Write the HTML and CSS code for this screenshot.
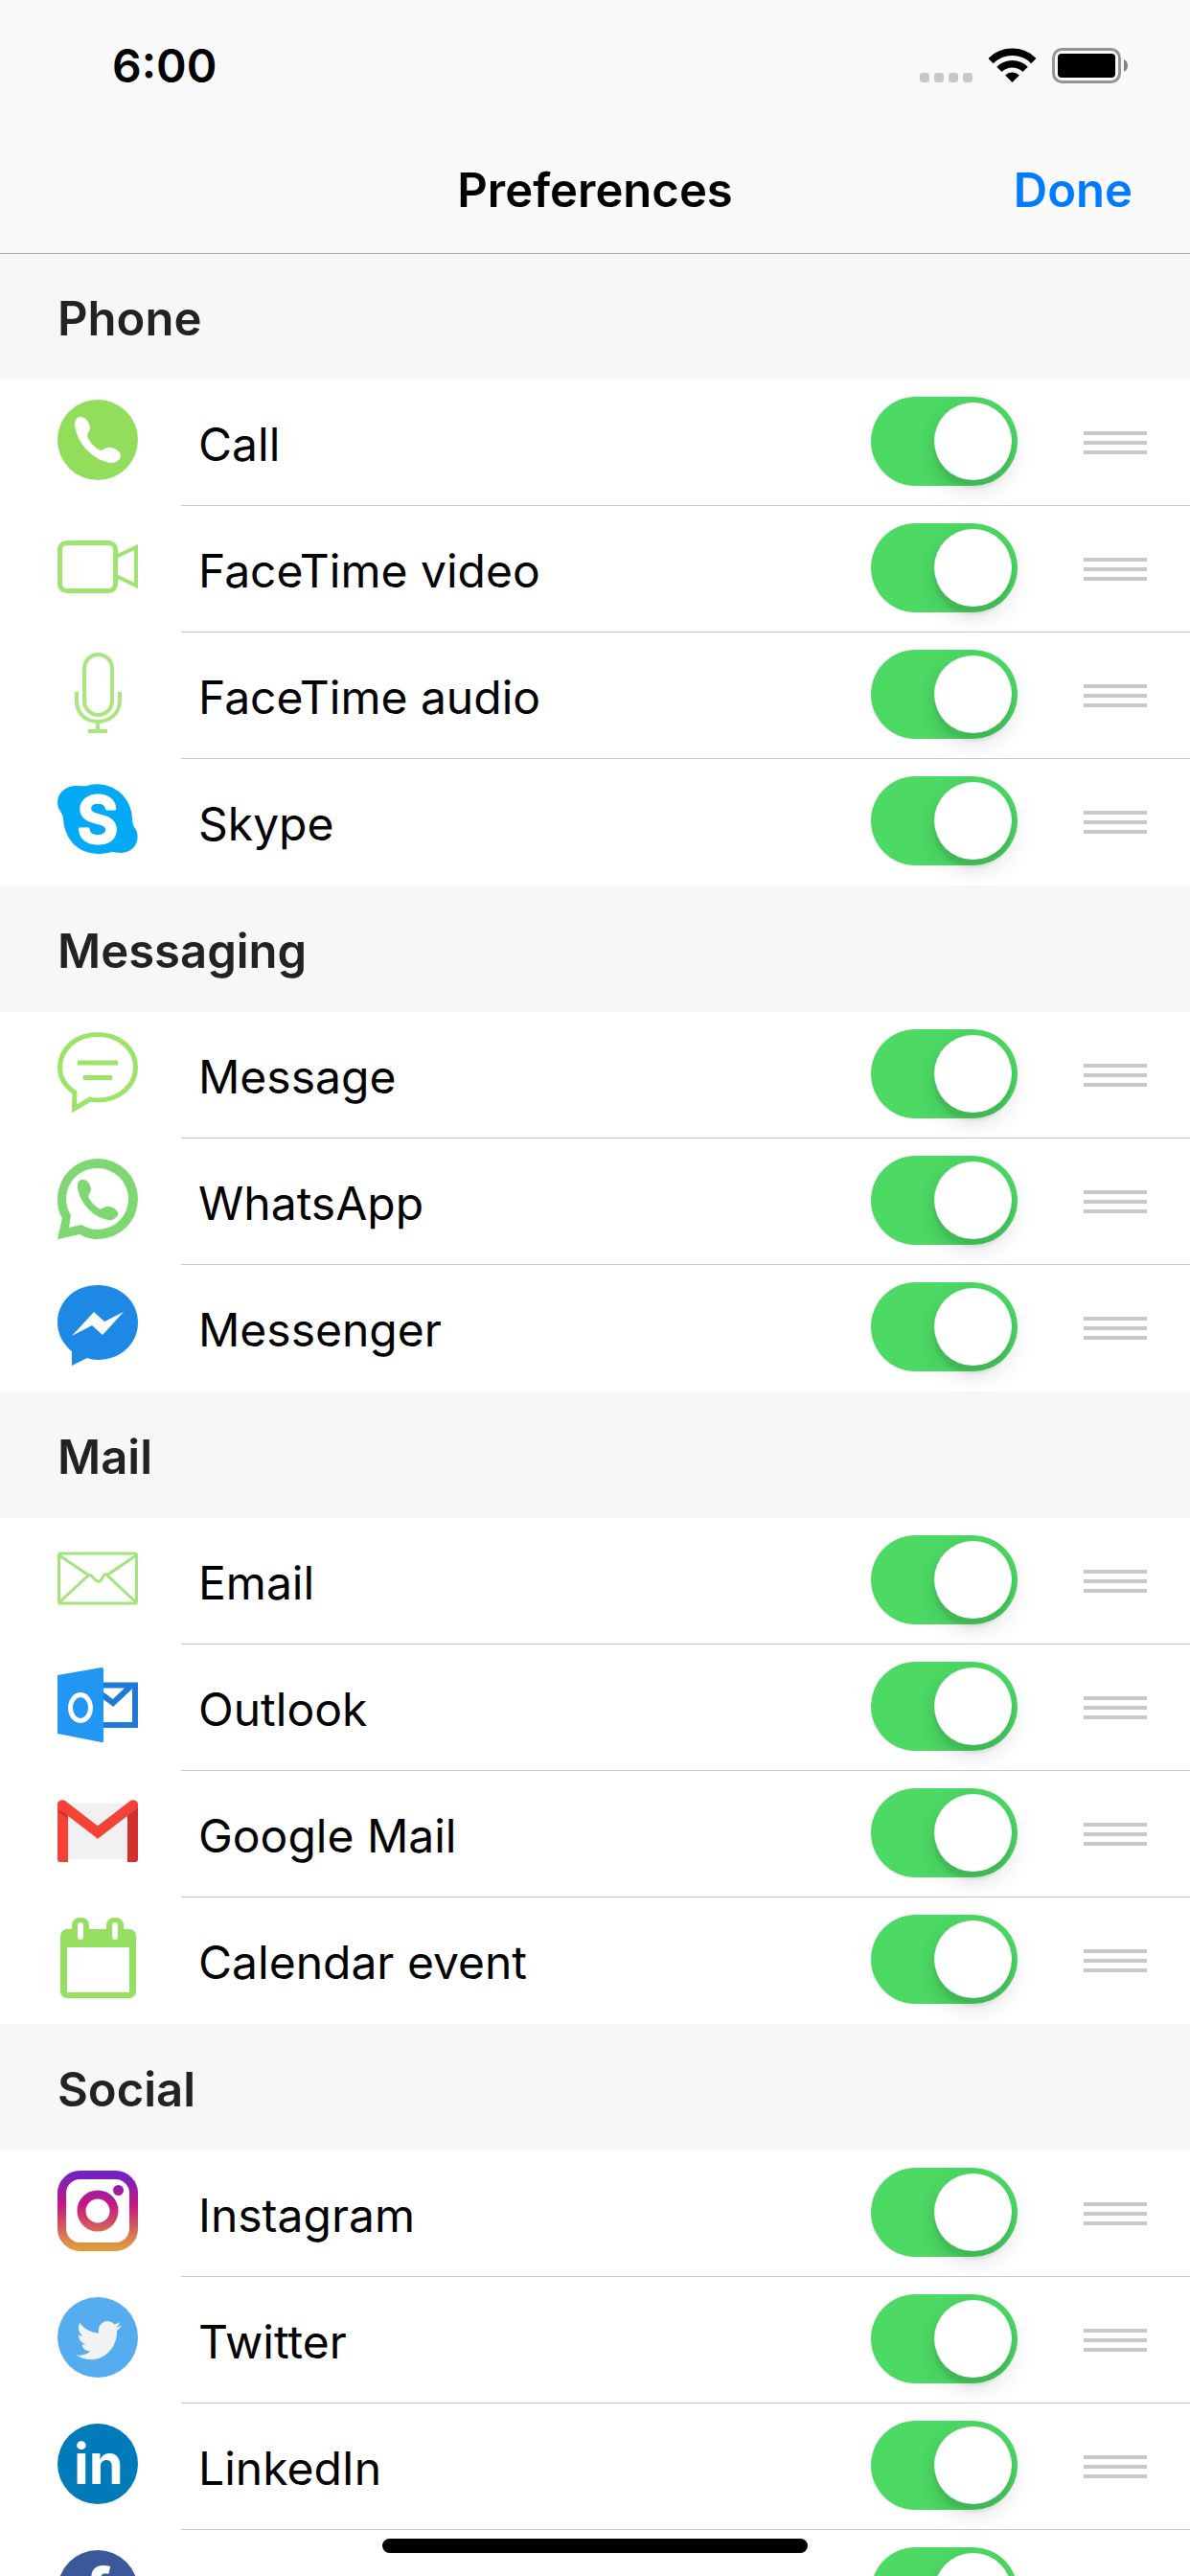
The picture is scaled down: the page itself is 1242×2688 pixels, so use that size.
FILE: index.html
```html
<!DOCTYPE html>
<html lang="en">
<head>
  <meta charset="UTF-8">
  <meta name="viewport" content="width=device-width, initial-scale=1.0">
  <title>Preferences</title>
  <link rel="stylesheet" href="styles.css">
</head>
<body>
  <header class="topbar">
    <div class="status">
      <span class="time">6:00</span>
      <div class="status-icons">
        <svg width="55" height="37" viewBox="0 0 55 37" fill="#c8c8c8"><rect y="26" width="10" height="10" rx="3"/><rect x="15" y="26" width="10" height="10" rx="3"/><rect x="30" y="26" width="10" height="10" rx="3"/><rect x="45" y="26" width="10" height="10" rx="3"/></svg>
        <svg width="49" height="37" viewBox="0 0 49 37"><path d="M2.1 13.6A31.7 31.7 0 0 1 46.9 13.6M10.9 22.4A19.2 19.2 0 0 1 38.1 22.4" fill="none" stroke="#000" stroke-width="7.5"/><path d="M24.5 36L17.1 28.6A10.5 10.5 0 0 1 31.9 28.6Z"/></svg>
        <svg width="79" height="37" viewBox="0 0 79 37"><rect x="1.5" y="1.5" width="69" height="34" rx="9" fill="none" stroke="#949494" stroke-width="3"/><rect x="6" y="6" width="60" height="25" rx="4"/><path d="M75 12Q79 14 79 18.500T75 25Z" fill="#808080"/></svg>
      </div>
    </div>
    <nav class="nav">
      <h1>Preferences</h1>
      <button type="button" class="done">Done</button>
    </nav>
  </header>

  <main class="list">
    <section>
      <h2>Phone</h2>
      <ul>
        <li class="row">
          <svg class="icon" viewBox="0 0 84 84"><circle cx="42" cy="42" r="42" fill="#92de5c"/><path fill="#fff" d="M24 18C29 18 33 23 34 29C34 33 31 35 31 38C32 43 40 51 45 53C48 53 51 49 56 50C62 51 67 56 66 60C64 64 60 66 56 66C38 64 20 46 18 26C18 22 20 18 24 18Z"/></svg>
          <div class="row-body">
            <label for="call">Call</label>
            <input type="checkbox" class="switch" id="call" checked>
            <button type="button" class="grip" aria-label="Reorder Call"></button>
          </div>
        </li>
        <li class="row">
          <svg class="icon" viewBox="0 0 84 84" fill="none" stroke="#9fe372" stroke-width="5"><rect x="2.500" y="17.500" width="58" height="50" rx="7"/><path d="M61 32L82 22V62L61 52" stroke-width="4"/></svg>
          <div class="row-body">
            <label for="ft-video">FaceTime video</label>
            <input type="checkbox" class="switch" id="ft-video" checked>
            <button type="button" class="grip" aria-label="Reorder FaceTime video"></button>
          </div>
        </li>
        <li class="row">
          <svg class="icon" viewBox="0 0 84 84" fill="none" stroke="#a9e680" stroke-width="4"><rect x="28" y="2" width="29" height="63" rx="14.500"/><path d="M20 41V50C20 63 29 72 42 72S65 63 65 50V41M42 72V82M32 82H52"/></svg>
          <div class="row-body">
            <label for="ft-audio">FaceTime audio</label>
            <input type="checkbox" class="switch" id="ft-audio" checked>
            <button type="button" class="grip" aria-label="Reorder FaceTime audio"></button>
          </div>
        </li>
        <li class="row">
          <svg class="icon" viewBox="0 0 84 84"><path fill="#03a9f4" d="M20 7C26 7 30 8 34 6C56 2 77 17 78 41C78 47 80 50 82 53C87 64 80 77 66 77C60 77 57 75 53 77C28 82 8 68 6 42C6 37 3 34 1 30C-3 18 6 7 20 7Z"/><text x="42" y="66" font-size="66" class="glyph glyph-round">S</text></svg>
          <div class="row-body">
            <label for="skype">Skype</label>
            <input type="checkbox" class="switch" id="skype" checked>
            <button type="button" class="grip" aria-label="Reorder Skype"></button>
          </div>
        </li>
      </ul>
    </section>

    <section>
      <h2>Messaging</h2>
      <ul>
        <li class="row">
          <svg class="icon" viewBox="0 0 84 84" fill="none" stroke="#9be468" stroke-width="5"><path d="M42 2.500C64 2.500 81.500 17 81.500 37C81.500 56 64 71 42 71C38 71 37 71 34 70L17.500 80L18 63C9 57 2.500 48 2.500 37C2.500 17 20 2.500 42 2.500Z"/><path d="M21 32H63M27 47.500H57"/></svg>
          <div class="row-body">
            <label for="message">Message</label>
            <input type="checkbox" class="switch" id="message" checked>
            <button type="button" class="grip" aria-label="Reorder Message"></button>
          </div>
        </li>
        <li class="row">
          <svg class="icon" viewBox="0 0 84 84" fill="#7ed772"><path fill-rule="evenodd" d="M0 84L5 62C1 56 0 49 0 42A42 42 0 0 1 84 42A42 42 0 0 1 42 84C36 84 30 83 23 79ZM42 10A32 32 0 0 1 42 74C36 74 30 72 25 69L12 72L14 59A32 32 0 0 1 42 10Z"/><path transform="translate(5 6) scale(.88)" d="M24 18C29 18 33 23 34 29C34 33 31 35 31 38C32 43 40 51 45 53C48 53 51 49 56 50C62 51 67 56 66 60C64 64 60 66 56 66C38 64 20 46 18 26C18 22 20 18 24 18Z"/></svg>
          <div class="row-body">
            <label for="whatsapp">WhatsApp</label>
            <input type="checkbox" class="switch" id="whatsapp" checked>
            <button type="button" class="grip" aria-label="Reorder WhatsApp"></button>
          </div>
        </li>
        <li class="row">
          <svg class="icon" viewBox="0 0 84 84"><path fill="#1e88e5" d="M42 0C66 0 84 17 84 39C84 61 66 78 42 78C38 78 34 77 31 76L15 84V69C6 62 0 51 0 39C0 17 18 0 42 0Z"/><path fill="#fafafa" d="M15 53L38 28L49 38L69 28L47 52L36 42Z"/></svg>
          <div class="row-body">
            <label for="messenger">Messenger</label>
            <input type="checkbox" class="switch" id="messenger" checked>
            <button type="button" class="grip" aria-label="Reorder Messenger"></button>
          </div>
        </li>
      </ul>
    </section>

    <section>
      <h2>Mail</h2>
      <ul>
        <li class="row">
          <svg class="icon" viewBox="0 0 84 84" fill="none" stroke="#a3e47a" stroke-width="3"><rect x="1.500" y="16" width="81" height="52" rx="2"/><path d="M2 18L32 38.500Q35 38 37 41T42 45T47 41T52 38.500L82 18M2 67L32 39M82 67L52 39"/></svg>
          <div class="row-body">
            <label for="email">Email</label>
            <input type="checkbox" class="switch" id="email" checked>
            <button type="button" class="grip" aria-label="Reorder Email"></button>
          </div>
        </li>
        <li class="row">
          <svg class="icon" viewBox="0 0 84 84"><path d="M46 21.500H81V63H46M46 31L58 40L76 23" fill="none" stroke="#2079d6" stroke-width="6"/><path fill="#2196f3" d="M0 11L46 3Q48 3 48 5V79Q48 82 46 81L0 72Z"/><ellipse cx="24" cy="45" rx="10.500" ry="13.500" fill="none" stroke="#fff" stroke-width="5"/></svg>
          <div class="row-body">
            <label for="outlook">Outlook</label>
            <input type="checkbox" class="switch" id="outlook" checked>
            <button type="button" class="grip" aria-label="Reorder Outlook"></button>
          </div>
        </li>
        <li class="row">
          <svg class="icon" viewBox="0 0 84 84"><path fill="#f1f1f1" d="M6 13H78V71H6Z"/><path fill="#f44336" d="M0 17H11V74H3Q0 74 0 71Z"/><path fill="#d32f2f" d="M73 17H84V71Q84 74 81 74H73Z"/><path fill="#d32f2f" d="M0 21L11 29V21Z"/><path d="M5 14.500L42 43L79 14.500" fill="none" stroke="#f44336" stroke-width="10.500" stroke-linecap="round"/></svg>
          <div class="row-body">
            <label for="gmail">Google Mail</label>
            <input type="checkbox" class="switch" id="gmail" checked>
            <button type="button" class="grip" aria-label="Reorder Google Mail"></button>
          </div>
        </li>
        <li class="row">
          <svg class="icon" viewBox="0 0 84 84" fill="#95e060"><rect x="3" y="12" width="79" height="72" rx="7"/><rect x="15" width="18" height="30" rx="8"/><rect x="51" width="18" height="30" rx="8"/><path fill="#fff" d="M10 31H75V78H10Z"/><rect x="21" y="5" width="6" height="18" rx="3" fill="#fff"/><rect x="57" y="5" width="6" height="18" rx="3" fill="#fff"/></svg>
          <div class="row-body">
            <label for="calendar">Calendar event</label>
            <input type="checkbox" class="switch" id="calendar" checked>
            <button type="button" class="grip" aria-label="Reorder Calendar event"></button>
          </div>
        </li>
      </ul>
    </section>

    <section>
      <h2>Social</h2>
      <ul>
        <li class="row">
          <svg class="icon" viewBox="0 0 84 84">
            <linearGradient id="insta" gradientUnits="userSpaceOnUse" x1="0" y1="4" x2="0" y2="80"><stop offset="0" stop-color="#7222c4"/><stop offset=".42" stop-color="#c8177f"/><stop offset="1" stop-color="#e09b3d"/></linearGradient>
            <g fill="none" stroke="url(#insta)" stroke-width="9"><rect x="4.500" y="4.500" width="75" height="75" rx="19"/><circle cx="42" cy="42" r="17"/></g>
            <circle cx="63.500" cy="20.500" r="5.500" fill="url(#insta)"/>
          </svg>
          <div class="row-body">
            <label for="instagram">Instagram</label>
            <input type="checkbox" class="switch" id="instagram" checked>
            <button type="button" class="grip" aria-label="Reorder Instagram"></button>
          </div>
        </li>
        <li class="row">
          <svg class="icon" viewBox="0 0 84 84"><circle cx="42" cy="42" r="42" fill="#55acee"/><path fill="#f1f2f2" transform="translate(20 20.500) scale(1.950 2.050)" d="M23.953 4.570a10 10 0 0 1-2.825.775 4.958 4.958 0 0 0 2.163-2.723c-.951.555-2.005.959-3.127 1.184a4.920 4.920 0 0 0-8.384 4.482C7.690 8.095 4.067 6.130 1.640 3.162a4.822 4.822 0 0 0-.666 2.475c0 1.710.870 3.213 2.188 4.096a4.904 4.904 0 0 1-2.228-.616v.060a4.923 4.923 0 0 0 3.946 4.827 4.996 4.996 0 0 1-2.212.085 4.936 4.936 0 0 0 4.604 3.417 9.867 9.867 0 0 1-6.102 2.105c-.390 0-.779-.023-1.170-.067a13.995 13.995 0 0 0 7.557 2.209c9.053 0 13.998-7.496 13.998-13.985 0-.210 0-.420-.015-.630A9.935 9.935 0 0 0 24 4.590z"/></svg>
          <div class="row-body">
            <label for="twitter">Twitter</label>
            <input type="checkbox" class="switch" id="twitter" checked>
            <button type="button" class="grip" aria-label="Reorder Twitter"></button>
          </div>
        </li>
        <li class="row">
          <svg class="icon" viewBox="0 0 84 84"><circle cx="42" cy="42" r="42" fill="#007ab9"/><text x="43" y="63" font-size="58" class="glyph">in</text></svg>
          <div class="row-body">
            <label for="linkedin">LinkedIn</label>
            <input type="checkbox" class="switch" id="linkedin" checked>
            <button type="button" class="grip" aria-label="Reorder LinkedIn"></button>
          </div>
        </li>
        <li class="row">
          <svg class="icon" viewBox="0 0 84 84"><circle cx="42" cy="42" r="42" fill="#3b5998"/><text x="42" y="69" font-size="70" class="glyph">f</text></svg>
          <div class="row-body">
            <input type="checkbox" class="switch" id="facebook" aria-label="Facebook" checked>
            <button type="button" class="grip" aria-label="Reorder Facebook"></button>
          </div>
        </li>
      </ul>
    </section>
  </main>
  <div class="home-bar"></div>
</body>
</html>
```

FILE: styles.css
```css
* { box-sizing: border-box; }
body { margin: 0; height: 100vh; display: flex; flex-direction: column; overflow: hidden; background-color: #fff; color: #000; font-family: Inter, "Liberation Sans", sans-serif; font-size: 48px; }
h1, h2 { margin: 0; font-size: 49px; font-weight: 600; }
ul { margin: 0; padding: 0; list-style: none; }
button { padding: 0; border: none; background: none; font-family: inherit; cursor: pointer; }

/* top bar */
.topbar { position: relative; z-index: 1; flex: none; background-color: #f9f9f9; box-shadow: 0 1px 0 #acacac; }
.status { display: flex; align-items: center; justify-content: space-between; height: 132px; padding: 4px 65px 0 117px; }
.time { font-weight: 600; }
.status-icons { display: flex; gap: 17px; }
.nav { display: grid; grid-template-columns: 1fr auto 1fr; align-items: center; height: 132px; padding: 0 60px; }
.nav h1 { grid-column: 2; }
.done { justify-self: end; color: #007aff; font-size: 49px; font-weight: 600; }

/* list */
.list { flex: 1; min-height: 0; overflow-y: auto; scrollbar-width: none; }
.list h2 { display: flex; align-items: center; height: 132px; padding: 4px 60px 0; background-color: #f7f7f7; color: #222; }
.row { display: flex; align-items: center; height: 132px; padding-left: 60px; }
.icon { flex: none; width: 84px; height: 84px; margin-bottom: 6px; }
.row-body { flex: 1; display: flex; align-items: center; justify-content: flex-end; height: 132px; margin-left: 45px; padding: 0 45px 0 18px; border-bottom: 1px solid #c8c7cc; }
.row:last-child .row-body { border-bottom-color: transparent; }
.row-body label { flex: 1; padding-top: 4px; }
.glyph { font-family: Inter, sans-serif; font-weight: 700; text-anchor: middle; fill: #fff; }
.glyph-round { font-weight: 600; stroke: #fff; stroke-width: 3; stroke-linejoin: round; }

.switch { appearance: none; flex: none; width: 153px; height: 93px; margin: 0 69px 2px 0; padding: 6px; border-radius: 47px; background-color: #e5e5ea; cursor: pointer; }
.switch::before { content: ""; display: block; width: 81px; height: 81px; border-radius: 50%; background-color: #fff; box-shadow: 0 9px 24px rgba(0, 0, 0, 0.15), 0 9px 3px rgba(0, 0, 0, 0.06); }
.switch:checked { background-color: #4cd964; }
.switch:checked::before { margin-left: auto; }
.grip { flex: none; width: 66px; height: 24px; background: repeating-linear-gradient(#c7c7cc 0 4px, transparent 4px 10px); cursor: grab; }

.home-bar { position: fixed; z-index: 2; bottom: 24px; left: 50%; width: 444px; height: 15px; margin-left: -222px; border-radius: 8px; background-color: #000; }
```
